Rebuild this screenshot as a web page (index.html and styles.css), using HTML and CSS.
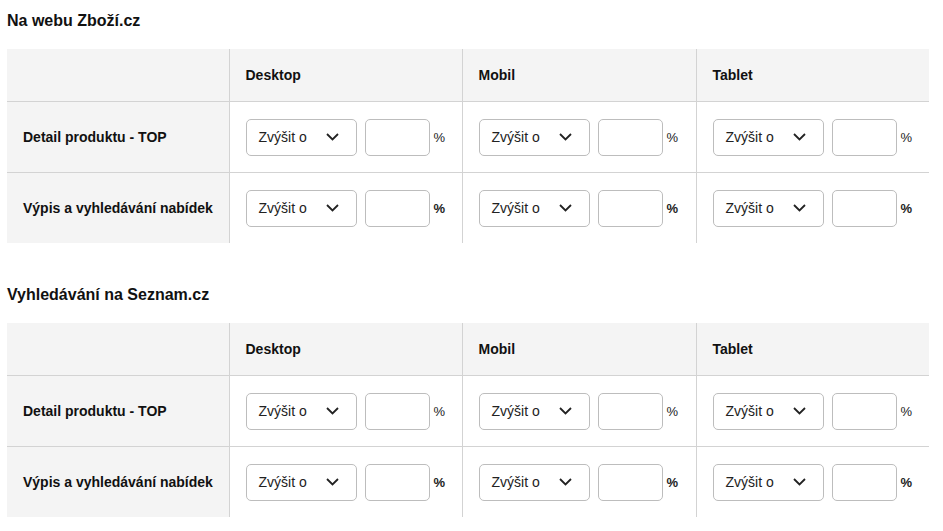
FILE: index.html
```html
<!DOCTYPE html>
<html lang="cs">
<head>
<meta charset="utf-8">
<title>Zvýšení nabídek</title>
<link rel="stylesheet" href="styles.css">
</head>
<body>
<section class="block">
  <h2 class="title">Na webu Zboží.cz</h2>
  <table class="grid">
    <colgroup><col class="c-label"><col class="c-a"><col class="c-b"><col class="c-a"></colgroup>
    <thead>
      <tr><th></th><th>Desktop</th><th>Mobil</th><th>Tablet</th></tr>
    </thead>
    <tbody>
      <tr>
        <th>Detail produktu - TOP</th>
        <td><div class="ctl"><div class="sel"><span>Zvýšit o</span><svg width="13" height="8" viewBox="0 0 13 8"><path d="M1 1l5.5 5.5L12 1" fill="none" stroke="#222" stroke-width="1.8"/></svg></div><div class="inp"></div><span class="pct">%</span></div></td>
        <td><div class="ctl"><div class="sel"><span>Zvýšit o</span><svg width="13" height="8" viewBox="0 0 13 8"><path d="M1 1l5.5 5.5L12 1" fill="none" stroke="#222" stroke-width="1.8"/></svg></div><div class="inp"></div><span class="pct">%</span></div></td>
        <td><div class="ctl"><div class="sel"><span>Zvýšit o</span><svg width="13" height="8" viewBox="0 0 13 8"><path d="M1 1l5.5 5.5L12 1" fill="none" stroke="#222" stroke-width="1.8"/></svg></div><div class="inp"></div><span class="pct">%</span></div></td>
      </tr>
      <tr>
        <th>Výpis a vyhledávání nabídek</th>
        <td><div class="ctl"><div class="sel"><span>Zvýšit o</span><svg width="13" height="8" viewBox="0 0 13 8"><path d="M1 1l5.5 5.5L12 1" fill="none" stroke="#222" stroke-width="1.8"/></svg></div><div class="inp"></div><span class="pct bold">%</span></div></td>
        <td><div class="ctl"><div class="sel"><span>Zvýšit o</span><svg width="13" height="8" viewBox="0 0 13 8"><path d="M1 1l5.5 5.5L12 1" fill="none" stroke="#222" stroke-width="1.8"/></svg></div><div class="inp"></div><span class="pct bold">%</span></div></td>
        <td><div class="ctl"><div class="sel"><span>Zvýšit o</span><svg width="13" height="8" viewBox="0 0 13 8"><path d="M1 1l5.5 5.5L12 1" fill="none" stroke="#222" stroke-width="1.8"/></svg></div><div class="inp"></div><span class="pct bold">%</span></div></td>
      </tr>
    </tbody>
  </table>
</section>
<section class="block">
  <h2 class="title">Vyhledávání na Seznam.cz</h2>
  <table class="grid">
    <colgroup><col class="c-label"><col class="c-a"><col class="c-b"><col class="c-a"></colgroup>
    <thead>
      <tr><th></th><th>Desktop</th><th>Mobil</th><th>Tablet</th></tr>
    </thead>
    <tbody>
      <tr>
        <th>Detail produktu - TOP</th>
        <td><div class="ctl"><div class="sel"><span>Zvýšit o</span><svg width="13" height="8" viewBox="0 0 13 8"><path d="M1 1l5.5 5.5L12 1" fill="none" stroke="#222" stroke-width="1.8"/></svg></div><div class="inp"></div><span class="pct">%</span></div></td>
        <td><div class="ctl"><div class="sel"><span>Zvýšit o</span><svg width="13" height="8" viewBox="0 0 13 8"><path d="M1 1l5.5 5.5L12 1" fill="none" stroke="#222" stroke-width="1.8"/></svg></div><div class="inp"></div><span class="pct">%</span></div></td>
        <td><div class="ctl"><div class="sel"><span>Zvýšit o</span><svg width="13" height="8" viewBox="0 0 13 8"><path d="M1 1l5.5 5.5L12 1" fill="none" stroke="#222" stroke-width="1.8"/></svg></div><div class="inp"></div><span class="pct">%</span></div></td>
      </tr>
      <tr>
        <th>Výpis a vyhledávání nabídek</th>
        <td><div class="ctl"><div class="sel"><span>Zvýšit o</span><svg width="13" height="8" viewBox="0 0 13 8"><path d="M1 1l5.5 5.5L12 1" fill="none" stroke="#222" stroke-width="1.8"/></svg></div><div class="inp"></div><span class="pct bold">%</span></div></td>
        <td><div class="ctl"><div class="sel"><span>Zvýšit o</span><svg width="13" height="8" viewBox="0 0 13 8"><path d="M1 1l5.5 5.5L12 1" fill="none" stroke="#222" stroke-width="1.8"/></svg></div><div class="inp"></div><span class="pct bold">%</span></div></td>
        <td><div class="ctl"><div class="sel"><span>Zvýšit o</span><svg width="13" height="8" viewBox="0 0 13 8"><path d="M1 1l5.5 5.5L12 1" fill="none" stroke="#222" stroke-width="1.8"/></svg></div><div class="inp"></div><span class="pct bold">%</span></div></td>
      </tr>
    </tbody>
  </table>
</section>
</body>
</html>
```
FILE: styles.css
```css
html, body {
  margin: 0;
  padding: 0;
  background: #fff;
}
body {
  padding: 0 14px 0 7px;
  font-family: "Liberation Sans", Arial, sans-serif;
  color: #111;
}
.block {
  margin: 0;
}
.title {
  margin: 0;
  height: 49px;
  padding-top: 11px;
  box-sizing: border-box;
  font-size: 16px;
  font-weight: bold;
  line-height: 19px;
  color: #111;
}
.block + .block .title {
  height: 80px;
  padding-top: 42px;
}
.grid {
  width: 922px;
  border-collapse: collapse;
  table-layout: fixed;
}
.c-label {
  width: 222px;
}
.c-a {
  width: 233px;
}
.c-b {
  width: 234px;
}
.grid th, .grid td {
  padding: 0 0 0 16px;
  text-align: left;
  vertical-align: middle;
  border-left: 1px solid #d3d3d3;
}
.grid tr > :first-child {
  border-left: none;
  padding-left: 16px;
}
.grid thead th {
  background: #f4f4f4;
  height: 52px;
  font-size: 14px;
  font-weight: bold;
  color: #111;
}
.grid tbody tr {
  border-top: 1px solid #d3d3d3;
}
.grid tbody th {
  background: #f4f4f4;
  height: 70px;
  font-size: 14px;
  font-weight: bold;
  color: #111;
}
.grid tbody td {
  height: 70px;
}
.ctl {
  display: flex;
  align-items: center;
}
.sel {
  width: 111px;
  height: 37px;
  box-sizing: border-box;
  border: 1px solid #bdbdbd;
  border-radius: 5px;
  display: flex;
  align-items: center;
  justify-content: space-between;
  padding: 0 17px 0 12px;
  font-size: 14px;
  color: #222;
  background: #fff;
}
.sel svg {
  display: block;
}
.inp {
  width: 65px;
  height: 37px;
  box-sizing: border-box;
  border: 1px solid #bdbdbd;
  border-radius: 5px;
  margin-left: 8px;
  background: #fff;
}
.pct {
  margin-left: 4px;
  font-size: 13px;
  color: #222;
}
.pct.bold {
  font-weight: bold;
}
```
